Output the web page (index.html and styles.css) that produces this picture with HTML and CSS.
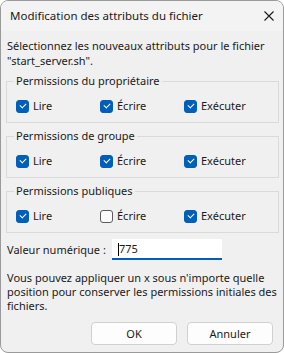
FILE: index.html
```html
<!DOCTYPE html>
<html lang="fr">
<head>
    <meta charset="UTF-8">
    <title>Modification des attributs du fichier</title>
    <link rel="stylesheet" href="styles.css">
</head>
<body>
    <div class="window">
        <!-- Title bar -->
        <div class="title-bar">
            <span class="title">Modification des attributs du fichier</span>
            <svg class="close" width="10" height="10" viewBox="0 0 10 10">
                <path d="M0.5 0.5 L9.5 9.5 M9.5 0.5 L0.5 9.5" stroke="#1a1a1a" stroke-width="1.1" fill="none"/>
            </svg>
        </div>

        <div class="content">
            <p class="intro">Sélectionnez les nouveaux attributs pour le fichier<br>"start_server.sh".</p>

            <fieldset class="group">
                <legend>Permissions du propriétaire</legend>
                <div class="row">
                    <label class="check"><span class="box on"></span>Lire</label>
                    <label class="check"><span class="box on"></span>Écrire</label>
                    <label class="check"><span class="box on"></span>Exécuter</label>
                </div>
            </fieldset>

            <fieldset class="group">
                <legend>Permissions de groupe</legend>
                <div class="row">
                    <label class="check"><span class="box on"></span>Lire</label>
                    <label class="check"><span class="box on"></span>Écrire</label>
                    <label class="check"><span class="box on"></span>Exécuter</label>
                </div>
            </fieldset>

            <fieldset class="group">
                <legend>Permissions publiques</legend>
                <div class="row">
                    <label class="check"><span class="box on"></span>Lire</label>
                    <label class="check"><span class="box"></span>Écrire</label>
                    <label class="check"><span class="box on"></span>Exécuter</label>
                </div>
            </fieldset>

            <div class="numeric">
                <span class="numeric-label">Valeur numérique :</span>
                <div class="input"><span class="caret"></span>775</div>
            </div>

            <p class="note">Vous pouvez appliquer un x sous n'importe quelle<br>position pour conserver les permissions initiales des<br>fichiers.</p>

            <div class="buttons">
                <button class="btn">OK</button>
                <button class="btn">Annuler</button>
            </div>
        </div>
    </div>
</body>
</html>
```

FILE: styles.css
```css
body {
    margin: 0;
    background: #ffffff;
    font-family: "Noto Sans", "Open Sans", sans-serif;
    font-size: 11px;
    line-height: 16px;
    color: #1a1a1a;
}

/* Dialog window */
.window {
    box-sizing: border-box;
    width: 284px;
    height: 353px;
    background: #f0f0f0;
    border: 1px solid #9a9a9a;
    border-radius: 8px;
    overflow: hidden;
}

.title-bar {
    height: 30px;
    display: flex;
    align-items: center;
    justify-content: space-between;
    padding: 0 9px 0 9px;
    background: #f3f3f3;
}

.title {
    font-size: 11.5px;
}

.content {
    padding: 0 4px 0 5px;
}

.intro {
    margin: 7px 0 5px 0;
    padding-left: 1px;
    line-height: 15px;
    white-space: nowrap;
}

/* Group boxes */
.group {
    margin: 0 0 5px 0;
    padding: 0 0 8px 9px;
    border: 1px solid #dadada;
    min-inline-size: 0;
}

.group legend {
    padding: 0 2px;
    margin-left: -2px;
    line-height: 16px;
    height: 16px;
}

.row {
    display: grid;
    grid-template-columns: 84px 84px 84px;
    height: 16px;
    padding-top: 9px;
}

.check {
    display: flex;
    align-items: center;
    height: 16px;
}

.box {
    box-sizing: border-box;
    width: 13px;
    height: 13px;
    margin-right: 4px;
    border: 1px solid #5c5c5c;
    border-radius: 3px;
    background: #fbfbfb;
    position: relative;
}

.box.on {
    background: #005fb8;
    border-color: #005fb8;
}

.box.on::after {
    content: '';
    position: absolute;
    left: 3px;
    top: 2px;
    width: 5px;
    height: 3px;
    border-left: 1px solid #ffffff;
    border-bottom: 1px solid #ffffff;
    transform: rotate(-45deg);
}

/* Numeric value */
.numeric {
    display: flex;
    align-items: center;
    height: 21px;
    margin-top: 6px;
}

.numeric-label {
    width: 105px;
    padding-left: 1px;
    white-space: nowrap;
}

.input {
    box-sizing: border-box;
    width: 110px;
    height: 21px;
    background: #ffffff;
    border-bottom: 2px solid #005fb8;
    padding: 1px 0 0 6px;
    display: flex;
    align-items: center;
}

.caret {
    width: 1px;
    height: 13px;
    background: #000000;
}

.note {
    margin: 11px -4px 0 0;
    padding-left: 1px;
    line-height: 14px;
    white-space: nowrap;
}

.buttons {
    display: flex;
    justify-content: flex-end;
    gap: 10px;
    margin-top: 9px;
    padding-right: 6px;
}

.btn {
    box-sizing: border-box;
    width: 86px;
    height: 23px;
    background: #fdfdfd;
    border: 1px solid #d0d0d0;
    border-radius: 4px;
    font-family: "Noto Sans", "Open Sans", sans-serif;
    font-size: 11px;
    color: #1a1a1a;
    padding: 0;
}
```
